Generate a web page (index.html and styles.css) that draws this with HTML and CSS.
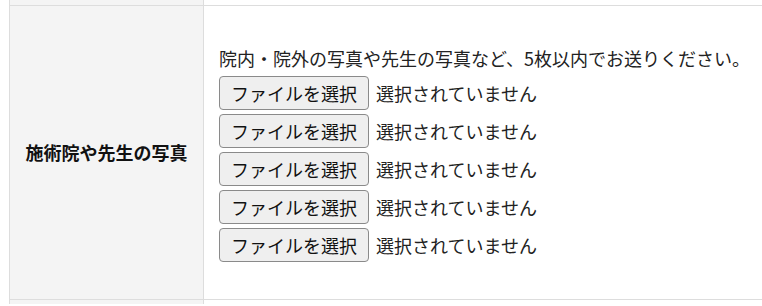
FILE: index.html
```html
<!DOCTYPE html>
<html lang="ja">
<head>
  <meta charset="UTF-8" />
  <meta name="viewport" content="width=device-width, initial-scale=1.0"/>
  <title>施術院や先生の写真</title>
  <link rel="stylesheet" href="styles.css">
</head>
<body>
  <table class="form-table">
    <tr class="row-top">
      <th></th>
      <td></td>
    </tr>
    <tr>
      <th>施術院や先生の写真</th>
      <td class="photo-cell">
        <p class="note">院内・院外の写真や先生の写真など、5枚以内でお送りください。</p>
        <div class="file-list">
          <div class="file-row"><button type="button" class="file-btn">ファイルを選択</button><span class="file-name">選択されていません</span></div>
          <div class="file-row"><button type="button" class="file-btn">ファイルを選択</button><span class="file-name">選択されていません</span></div>
          <div class="file-row"><button type="button" class="file-btn">ファイルを選択</button><span class="file-name">選択されていません</span></div>
          <div class="file-row"><button type="button" class="file-btn">ファイルを選択</button><span class="file-name">選択されていません</span></div>
          <div class="file-row"><button type="button" class="file-btn">ファイルを選択</button><span class="file-name">選択されていません</span></div>
        </div>
      </td>
    </tr>
    <tr class="row-bottom">
      <th></th>
      <td></td>
    </tr>
  </table>
</body>
</html>
```

FILE: styles.css
```css
* {
  margin: 0;
  padding: 0;
  box-sizing: border-box;
}
html, body {
  overflow: hidden;
}
body {
  background: #fff;
  color: #222;
  font-family: "Noto Sans CJK JP", "Noto Sans", sans-serif;
  font-size: 18px;
}
.form-table {
  border-collapse: collapse;
  margin-left: 9px;
  width: 753px;
}
.form-table th,
.form-table td {
  border: 1px solid #dddddd;
  border-right: none;
}
.form-table th {
  width: 194px;
  background: #f4f4f4;
  font-weight: bold;
  text-align: center;
  vertical-align: middle;
  color: #111;
}
.row-top th,
.row-top td {
  height: 5px;
  border-top: none;
}
.row-bottom th,
.row-bottom td {
  height: 5px;
  border-bottom: none;
}
.photo-cell {
  padding: 38px 0 37px 15px;
  vertical-align: top;
}
.note {
  line-height: 28px;
  margin-bottom: 4px;
  white-space: nowrap;
}
.file-list {
  display: flex;
  flex-direction: column;
  gap: 4px;
}
.file-row {
  display: flex;
  align-items: center;
}
.file-btn {
  height: 34px;
  padding: 0 11px;
  background: #efefef;
  border: 1px solid #8a8a8a;
  border-radius: 4px;
  font-family: inherit;
  font-size: 18px;
  color: #111;
}
.file-name {
  margin-left: 7px;
}
```
